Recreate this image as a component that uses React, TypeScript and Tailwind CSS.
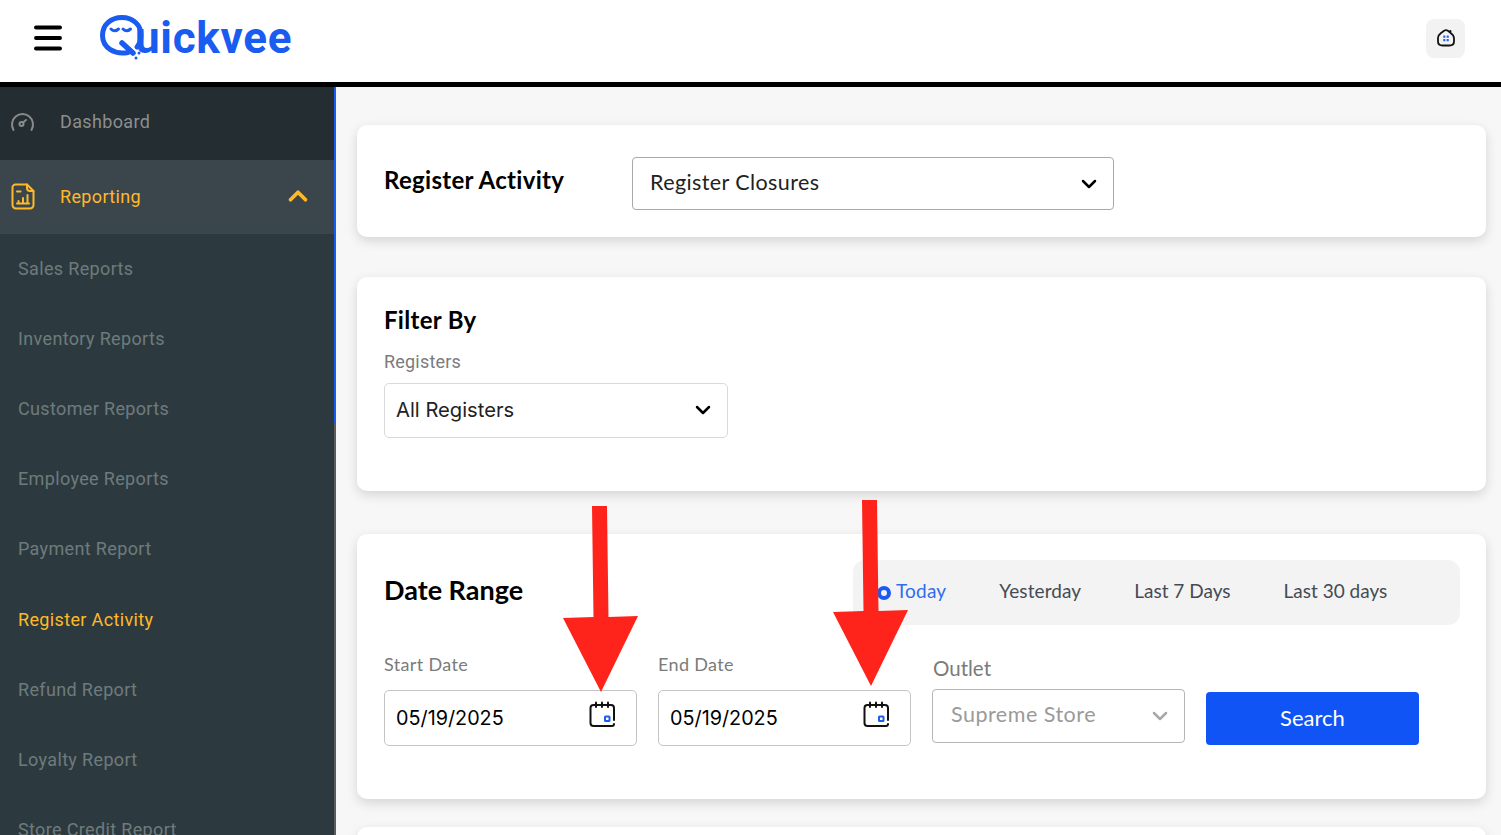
import { ChevronDown, ChevronUp, Menu } from "lucide-react";

const reportLinks = [
    "Sales Reports",
    "Inventory Reports",
    "Customer Reports",
    "Employee Reports",
    "Payment Report",
    "Register Activity",
    "Refund Report",
    "Loyalty Report",
    "Store Credit Report",
];

const GaugeIcon = () => (
    <svg width="25" height="20" viewBox="0 0 25 20" fill="none" stroke="#8a8a8a" strokeWidth="2" strokeLinecap="round">
        <path d="M3.5 18 A10.5 10.5 0 1 1 21.5 18" />
        <circle cx="11.5" cy="12" r="2" />
        <path d="M13 10.5 L16 8" />
    </svg>
);

const ReportIcon = () => (
    <svg width="24" height="27" viewBox="0 0 24 27" fill="none" stroke="#ffb928" strokeWidth="2" strokeLinejoin="round" strokeLinecap="round">
        <path d="M4.5 1.5 H16 L22.5 8 V22 a3.5 3.5 0 0 1 -3.5 3.5 H5 a3.5 3.5 0 0 1 -3.5 -3.5 V4.5 a3 3 0 0 1 3 -3 Z" />
        <path d="M16 1.5 V5 a3 3 0 0 0 3 3 H22.5" />
        <path d="M6 8.5 H9.5" />
        <path d="M6 20.5 H18" />
        <path d="M7.5 20 V18" />
        <path d="M12 20 V15" />
        <path d="M16.5 20 V12" />
    </svg>
);

const StoreIcon = () => (
    <svg width="20" height="20" viewBox="0 0 20 20" fill="none">
        <path d="M2 10 C2 7.5 3 6.5 5 5 L8.5 2.5 C9.5 2 10.5 2 11.5 2.5 L13.5 4 L14.5 3 V5 C17 6.5 18 8 18 10.5 V13.5 C18 16.5 16.5 17.5 13.5 17.5 H6.5 C3.5 17.5 2 16.5 2 13.5 Z" stroke="#111" strokeWidth="1.8" strokeLinejoin="round" />
        <rect x="7.2" y="7.5" width="2.2" height="2.2" rx="0.5" fill="#2563eb" />
        <rect x="10.6" y="7.5" width="2.2" height="2.2" rx="0.5" fill="#2563eb" />
        <rect x="7.2" y="11" width="2.2" height="2.2" rx="0.5" fill="#2563eb" />
        <rect x="10.6" y="11" width="2.2" height="2.2" rx="0.5" fill="#2563eb" />
    </svg>
);

const CalendarIcon = () => (
    <svg width="26" height="26" viewBox="0 0 26 26" fill="none" stroke="#111" strokeWidth="2" strokeLinecap="round">
        <path d="M25 19 V7 Q25 4 22 4 H4.5 Q1.5 4 1.5 7 V22 Q1.5 25 4.5 25 H23 Q25 25 25 23" />
        <path d="M7 1.5 V6" />
        <path d="M13 1.5 V6" />
        <path d="M19 1.5 V6" />
        <rect x="16" y="15.5" width="4.5" height="4.5" rx="0.5" stroke="#1d5cf0" />
    </svg>
);

const LogoMark = () => (
    <svg width="50" height="46" viewBox="0 0 50 46" fill="none" stroke="#1a5cf0" strokeLinecap="round">
        <path d="M28 37.5 C15 40 2.5 33 2.5 20.5 C2.5 9.5 11 2.5 22 2.5 C33 2.5 41 10 41 20 C41 25 39.5 29 37 32" strokeWidth="5" />
        <path d="M11 14 q3.5 3.5 7.5 0 M23 14 q3.5 3.5 7.5 0" strokeWidth="3" />
        <path d="M22 28 L33 38" strokeWidth="5.5" />
        <circle cx="39" cy="38" r="1.5" fill="#1a5cf0" stroke="none" />
        <circle cx="36" cy="43" r="1.5" fill="#1a5cf0" stroke="none" />
    </svg>
);

const RedArrow = ({ className }: { className: string }) => (
    <svg className={className} width="76" height="186" viewBox="0 0 76 186" fill="#ff241b">
        <polygon points="29,0 44,0 45.5,111 75,110 38,186 0,112 30.5,111" />
    </svg>
);

const DateField = ({ label, value }: { label: string; value: string }) => (
    <div className="w-[253px]">
        <div className="text-[18px] leading-6 tracking-[0.35px] text-[#7b7b7b] mb-[14px]">{label}</div>
        <div className="h-[56px] rounded-[5px] border border-[#c4c4c4] bg-white pl-[11px] pr-[21px] pt-[1px] flex items-center justify-between">
            <span className="text-[19.8px] text-black font-['Inter',sans-serif]">{value}</span>
            <span className="-mt-[10px]">
                <CalendarIcon />
            </span>
        </div>
    </div>
);

export default function App() {
    return (
        <div className="h-[835px] overflow-hidden bg-[#f7f7f7] font-['Lato',sans-serif] relative">
            <header className="h-[87px] bg-white border-b-[5px] border-black flex items-center pl-[34px] pr-[36px] pb-[6px]">
                <Menu size={36} strokeWidth={2.6} className="text-black -ml-[4px]" />
                <div className="flex items-center ml-[34px]">
                    <LogoMark />
                    <span className="text-[44px] leading-none font-bold text-[#1a5cf0] font-['Roboto',sans-serif] -ml-[15px] tracking-[0.7px]">
                        uickvee
                    </span>
                </div>
                <div className="ml-auto w-[39px] h-[39px] rounded-[8px] bg-[#f2f2f2] flex items-center justify-center">
                    <StoreIcon />
                </div>
            </header>

            <div className="flex h-[748px]">
                <aside className="w-[336px] shrink-0 flex font-['Roboto',sans-serif] tracking-[0.35px]">
                    <div className="w-[334px] bg-[#2c3a3f] overflow-hidden">
                        <div className="h-[73px] bg-[#232d32] flex items-center pl-[10px] pb-[4px]">
                            <GaugeIcon />
                            <span className="ml-[25px] text-[18px] text-[#8d8d8d]">Dashboard</span>
                        </div>
                        <div className="h-[74px] bg-[#3b464c] flex items-center pl-[11px] pr-[21px] pb-[2px]">
                            <ReportIcon />
                            <span className="ml-[25px] text-[18px] text-[#ffb928]">Reporting</span>
                            <ChevronUp size={30} strokeWidth={3} className="ml-auto text-[#ffb928]" />
                        </div>
                        <ul className="-mt-[1px]">
                            {reportLinks.map((link) => (
                                <li
                                    key={link}
                                    className={`h-[70.2px] flex items-center pl-[18px] text-[18px] ${
                                        link === "Register Activity" ? "text-[#ffb928]" : "text-[#6f7a7d]"
                                    }`}
                                >
                                    {link}
                                </li>
                            ))}
                        </ul>
                    </div>
                    <div className="w-[2px] bg-[#5c5c5c]">
                        <div className="h-[337px] bg-[#1a5cf0]" />
                    </div>
                </aside>

                <main className="flex-1 pl-[21px] pr-[15px] pt-[38px]">
                    <section className="h-[112px] bg-white rounded-[10px] shadow-[0_4px_12px_rgba(0,0,0,0.14)] pl-[27px] pt-[32px] flex items-start">
                        <h2 className="w-[248px] text-[24px] tracking-[0.3px] leading-[46px] font-bold text-black">
                            Register Activity
                        </h2>
                        <div className="w-[482px] h-[53px] rounded-[4px] border border-[#a9a9a9] pl-[17px] pr-[12px] pb-[3px] flex items-center justify-between text-[21.5px] tracking-[0.4px] text-[#222]">
                            Register Closures
                            <ChevronDown size={24} strokeWidth={2.5} className="text-black mt-[3px]" />
                        </div>
                    </section>

                    <section className="mt-[40px] h-[214px] bg-white rounded-[10px] shadow-[0_4px_12px_rgba(0,0,0,0.14)] pl-[27px] pt-[27px]">
                        <h2 className="text-[24px] tracking-[0.3px] leading-8 font-bold text-black">Filter By</h2>
                        <div className="mt-[14px] text-[18px] leading-6 tracking-[0.2px] text-[#7b7b7b] font-['Roboto',sans-serif]">Registers</div>
                        <div className="mt-[9px] w-[344px] h-[55px] rounded-[5px] border border-[#d9d9d9] pl-[11px] pr-[12px] pb-[1px] flex items-center justify-between text-[20.2px] text-[#222] font-['Inter',sans-serif]">
                            All Registers
                            <ChevronDown size={24} strokeWidth={2.5} className="text-black" />
                        </div>
                    </section>

                    <section className="mt-[43px] h-[265px] bg-white rounded-[10px] shadow-[0_4px_12px_rgba(0,0,0,0.14)] pl-[27px] pr-[26px] pt-[26px]">
                        <div className="flex items-center justify-between h-[65px]">
                            <h2 className="text-[27px] pb-[4px] font-bold text-black">Date Range</h2>
                            <div className="w-[607px] h-[65px] rounded-[12px] bg-[#f3f3f3] flex items-center pl-[24px] pb-[3px] text-[19px] text-[#454b54]">
                                <span className="w-[14px] h-[14px] rounded-full border-[4px] border-[#1a5cf0] mt-[3px]" />
                                <span className="ml-[5px] text-[#2f6df0] tracking-[0.2px]">Today</span>
                                <span className="ml-[53px] tracking-[0.1px]">Yesterday</span>
                                <span className="ml-[53px]">Last 7 Days</span>
                                <span className="ml-[53px]">Last 30 days</span>
                            </div>
                        </div>
                        <div className="flex items-end mt-[27px] gap-[21px]">
                            <DateField label="Start Date" value="05/19/2025" />
                            <DateField label="End Date" value="05/19/2025" />
                            <div className="w-[253px] mb-[3px]">
                                <div className="text-[20.5px] leading-7 text-[#7b7b7b] mb-[7px] pl-[1px]">Outlet</div>
                                <div className="h-[54px] rounded-[4px] border border-[#b5b5b5] pl-[18px] pr-[12px] pb-[3px] flex items-center justify-between text-[21.5px] tracking-[0.5px] text-[#9a9a9a]">
                                    Supreme Store
                                    <ChevronDown size={24} strokeWidth={2.5} className="text-[#a8a8a8] mt-[3px]" />
                                </div>
                            </div>
                            <button className="w-[213px] h-[53px] mb-[1px] pb-[3px] rounded-[4px] bg-[#1154f5] text-white text-[22px]">
                                Search
                            </button>
                        </div>
                    </section>

                    <section className="mt-[28px] h-[60px] bg-white rounded-[10px] shadow-[0_4px_12px_rgba(0,0,0,0.14)]" />
                </main>
            </div>

            <RedArrow className="absolute left-[563px] top-[506px]" />
            <RedArrow className="absolute left-[833px] top-[500px]" />
        </div>
    );
}
